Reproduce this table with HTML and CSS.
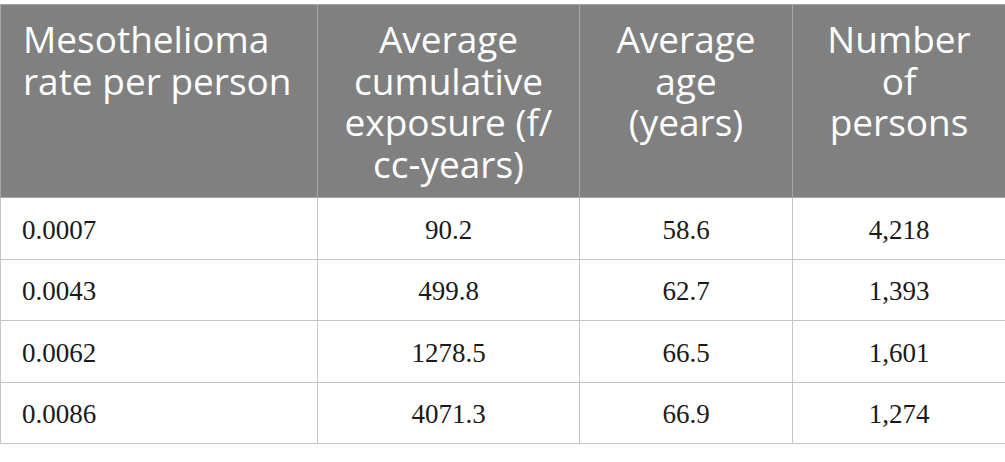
FILE: index.html
```html
<!DOCTYPE html>
<html>
<head>
<meta charset="utf-8">
<link rel="stylesheet" href="styles.css">
</head>
<body>
<table class="data">
  <colgroup>
    <col class="c1"><col class="c2"><col class="c3"><col class="c4">
  </colgroup>
  <thead>
    <tr>
      <th class="left">Mesothelioma rate per person</th>
      <th>Average cumulative exposure (f/ cc-years)</th>
      <th>Average age (years)</th>
      <th>Number of persons</th>
    </tr>
  </thead>
  <tbody>
    <tr><td class="left">0.0007</td><td>90.2</td><td>58.6</td><td>4,218</td></tr>
    <tr><td class="left">0.0043</td><td>499.8</td><td>62.7</td><td>1,393</td></tr>
    <tr><td class="left">0.0062</td><td>1278.5</td><td>66.5</td><td>1,601</td></tr>
    <tr><td class="left">0.0086</td><td>4071.3</td><td>66.9</td><td>1,274</td></tr>
  </tbody>
</table>
</body>
</html>
```

FILE: styles.css
```css
html, body {
  margin: 0;
  padding: 0;
  background: #ffffff;
}

body {
  padding-top: 4px;
}

.data {
  border-collapse: collapse;
  width: 1005px;
  table-layout: fixed;
}

.c1 { width: 317px; }
.c2 { width: 262px; }
.c3 { width: 213px; }
.c4 { width: 213px; }

.data th {
  background: #808080;
  color: #ffffff;
  font-family: "Open Sans", sans-serif;
  font-weight: 400;
  font-size: 37px;
  line-height: 41.7px;
  text-align: center;
  vertical-align: top;
  padding: 13px 22px 0;
  height: 193px;
  box-sizing: border-box;
  border: 1px solid #a6a6a6;
}

.data td {
  font-family: "Liberation Serif", "Times New Roman", serif;
  font-size: 27px;
  color: #1a1a1a;
  text-align: center;
  vertical-align: middle;
  height: 61.5px;
  box-sizing: border-box;
  padding: 4px 21px 0;
  border: 1.5px solid #c4c4c4;
}

.data .left {
  text-align: left;
}
```
